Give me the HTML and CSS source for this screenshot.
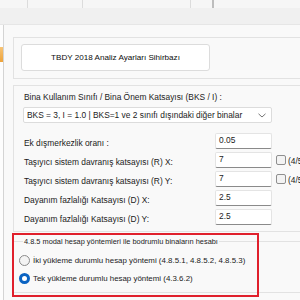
FILE: index.html
```html
<!DOCTYPE html>
<html lang="tr">
<head>
    <meta charset="UTF-8">
    <title>TBDY 2018 Analiz Ayarları Sihirbazı</title>
    <link rel="stylesheet" href="styles.css">
</head>
<body>
    <div class="tabs">
        <span class="tab"></span>
        <span class="tab"></span>
        <span class="tab"></span>
        <span class="tab tab-dark"></span>
        <span class="tab"></span>
    </div>
    <div class="toolbar"></div>

    <div class="main">
        <div class="side">
            <div class="side-mark"></div>
        </div>

        <div class="content">
            <div class="group group-title">
                <div class="title-box">TBDY 2018 Analiz Ayarları Sihirbazı</div>
            </div>

            <div class="group group-params">
                <label class="label-top">Bina Kullanım Sınıfı / Bina Önem Katsayısı (BKS / I) :</label>
                <div class="select">
                    <span>BKS = 3, I = 1.0 | BKS=1 ve 2 sınıfı dışındaki diğer binalar</span>
                    <svg width="8" height="5" viewBox="0 0 8 5"><path d="M0.5 0.8 L4 4 L7.5 0.8" fill="none" stroke="#666" stroke-width="0.9"/></svg>
                </div>

                <div class="row">
                    <label>Ek dışmerkezlik oranı :</label>
                    <div class="input">0.05</div>
                </div>
                <div class="row">
                    <label>Taşıyıcı sistem davranış katsayısı (R) X:</label>
                    <div class="input">7</div>
                    <span class="check"></span><span class="check-text">(4/5)</span>
                </div>
                <div class="row">
                    <label>Taşıyıcı sistem davranış katsayısı (R) Y:</label>
                    <div class="input">7</div>
                    <span class="check"></span><span class="check-text">(4/5)</span>
                </div>
                <div class="row">
                    <label>Dayanım fazlalığı Katsayısı (D) X:</label>
                    <div class="input">2.5</div>
                </div>
                <div class="row">
                    <label>Dayanım fazlalığı Katsayısı (D) Y:</label>
                    <div class="input">2.5</div>
                </div>
            </div>

            <fieldset class="group-method">
                <legend>4.8.5 modal hesap yöntemleri ile bodrumlu binaların hesabı</legend>
                <div class="radio-row">
                    <span class="radio"></span>
                    <span>İki yükleme durumlu hesap yöntemi (4.8.5.1, 4.8.5.2, 4.8.5.3)</span>
                </div>
                <div class="radio-row">
                    <span class="radio checked"></span>
                    <span>Tek yükleme durumlu hesap yöntemi (4.3.6.2)</span>
                </div>
            </fieldset>
        </div>
    </div>

    <div class="highlight"></div>
</body>
</html>
```

FILE: styles.css
```css
* {
    margin: 0;
    padding: 0;
    box-sizing: border-box;
}
body {
    width: 300px;
    height: 300px;
    overflow: hidden;
    position: relative;
    background-color: #f9f9f9;
    font-family: "Liberation Sans", Arial, sans-serif;
    font-size: 8.4px;
    color: #1b1b1b;
    white-space: nowrap;
}

.tabs {
    display: flex;
    height: 8px;
    background-color: #f6f6f6;
}
.tab {
    border-right: 1px solid #dcdcdc;
}
.tab:nth-child(1) { width: 28px; }
.tab:nth-child(2) { width: 55px; }
.tab:nth-child(3) { width: 108px; }
.tab:nth-child(4) { width: 23px; }
.tab:nth-child(5) { flex: 1; border-right: none; }
.tab-dark {
    border-right: 2px solid #bdbdbd;
}
.toolbar {
    height: 17px;
    background-color: #f0f0f0;
    border-bottom: 1px solid #e6e6e6;
}

.main {
    display: flex;
    height: 275px;
}
.side {
    width: 6px;
    background-color: #fdfdfd;
    border-right: 1px solid #d4d4d4;
}
.side-mark {
    margin-top: 22px;
    width: 3px;
    height: 15px;
    background: linear-gradient(#f7c476, #eea33a);
}

.content {
    flex: 1;
    padding: 12px 0 0 9px;
}

.group {
    border: 1px solid #e2e2e2;
    border-right: none;
}
.group-title {
    height: 42px;
    padding: 6px 0 0 7px;
}
.title-box {
    width: 189px;
    height: 27px;
    background-color: #fff;
    border: 1px solid #dcdcdc;
    border-radius: 3px;
    display: flex;
    align-items: center;
    justify-content: center;
    font-size: 8.1px;
    color: #0d0d0d;
}

.group-params {
    margin-top: 6px;
    height: 147px;
    padding: 6px 0 0 9px;
}
.label-top {
    display: block;
    margin-left: 1px;
    height: 15px;
}
.select {
    width: 249px;
    height: 16px;
    background-color: #fff;
    border: 1px solid #dcdcdc;
    border-radius: 2px;
    display: flex;
    align-items: center;
    justify-content: space-between;
    padding: 0 5px 0 3px;
    margin-bottom: 10px;
}

.row {
    display: flex;
    align-items: flex-start;
    height: 19px;
}
.row label {
    width: 192px;
    padding-left: 1px;
    padding-top: 5px;
}
.input {
    width: 57px;
    height: 16px;
    background-color: #fff;
    border: 1px solid #e4e4e4;
    border-bottom-color: #8a8a8a;
    border-radius: 2px;
    padding: 1px 3px 0;
}
.check {
    width: 10px;
    height: 10px;
    margin: 3px 0 0 4px;
    border: 1px solid #8f8f8f;
    border-radius: 2px;
    background-color: #f3f3f3;
}
.check-text {
    margin: 4px 0 0 2px;
}

.group-method {
    margin-top: 5px;
    border: 1px solid #e2e2e2;
    border-right: none;
    height: 56px;
    padding: 5px 0 0 5px;
    font-size: 7.9px;
}
.group-method legend {
    margin-left: 4px;
    padding: 0 1px;
    font-size: 7.4px;
}
.radio-row {
    display: flex;
    align-items: center;
    gap: 3px;
    height: 18px;
}
.radio {
    width: 11px;
    height: 11px;
    border: 1px solid #8a8a8a;
    border-radius: 50%;
    background-color: #f3f3f3;
}
.radio.checked {
    border: 3px solid #0a63c2;
    background-color: #fff;
}

.highlight {
    position: absolute;
    left: 12px;
    top: 233px;
    width: 247px;
    height: 64px;
    border: 2px solid #e0202c;
}
```
